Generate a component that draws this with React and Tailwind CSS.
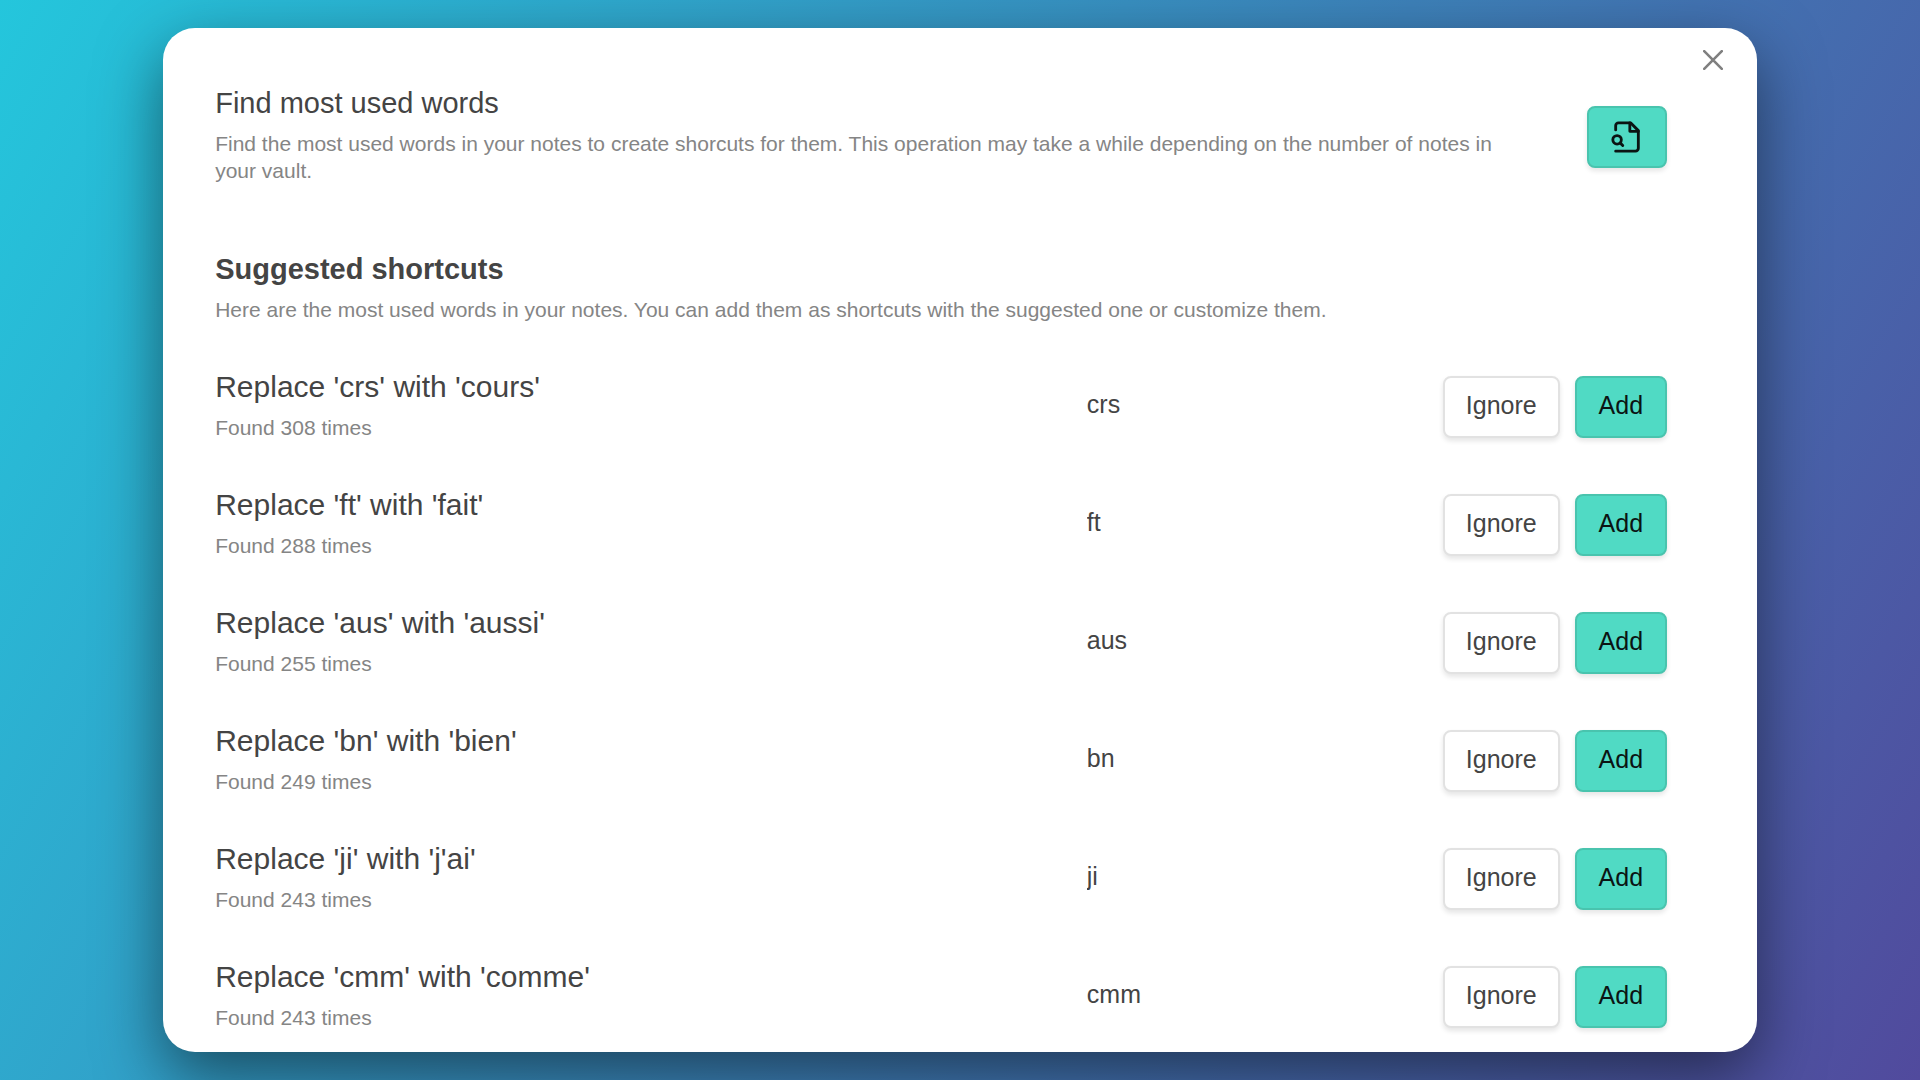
const suggestions = [
  { word: "cours", shortcut: "crs", count: 308 },
  { word: "fait", shortcut: "ft", count: 288 },
  { word: "aussi", shortcut: "aus", count: 255 },
  { word: "bien", shortcut: "bn", count: 249 },
  { word: "j'ai", shortcut: "ji", count: 243 },
  { word: "comme", shortcut: "cmm", count: 243 },
];

const accentButton =
  "flex h-[62px] shrink-0 cursor-pointer items-center justify-center rounded-lg border-2 border-[#49c4ae] bg-[#50dac4] text-[25px] leading-[30px] text-[#0b1413] shadow-[0_3px_5px_rgba(0,0,0,0.1)]";
const plainButton =
  "flex h-[62px] shrink-0 cursor-pointer items-center justify-center rounded-lg border-2 border-[#e2e2e2] bg-white text-[25px] leading-[30px] text-[#444] shadow-[0_3px_5px_rgba(0,0,0,0.1)]";

function CloseIcon() {
  return (
    <svg viewBox="0 0 20 20" className="size-5" fill="none" stroke="currentColor" strokeWidth="2.6" strokeLinecap="round" aria-hidden="true">
      <path d="M1.2 1.2 18.8 18.8M18.8 1.2 1.2 18.8" />
    </svg>
  );
}

function FileSearchIcon() {
  return (
    <svg viewBox="0 0 24 24" className="size-[34px]" fill="none" stroke="currentColor" strokeWidth="2" strokeLinecap="round" strokeLinejoin="round" aria-hidden="true">
      <path d="M4 22h14a2 2 0 0 0 2-2V7.5L14.5 2H6a2 2 0 0 0-2 2v3" />
      <path d="M14 2v6h6" />
      <circle cx="5" cy="14" r="3" />
      <path d="m9 18-1.5-1.5" />
    </svg>
  );
}

function SuggestionRow({ word, shortcut, count }) {
  return (
    <li className="flex items-center">
      <div className="min-w-0 flex-1">
        <h3 className="text-[30px] leading-[38px]">
          Replace '{shortcut}' with '{word}'
        </h3>
        <p className="mt-2 text-[21px] leading-[27px] text-[#858585]">Found {count} times</p>
      </div>
      <div className="flex items-center gap-[15px] pt-1">
        <input
          type="text"
          defaultValue={shortcut}
          aria-label={`Shortcut for ${word}`}
          className="h-[62px] w-[353px] bg-transparent px-3 pb-1 text-[25px] leading-[30px] text-[#444] outline-none"
        />
        <button type="button" className={`${plainButton} w-[117px] pb-1`}>
          Ignore
        </button>
        <button type="button" className={`${accentButton} w-[92px] pb-1`}>
          Add
        </button>
      </div>
    </li>
  );
}

export default function App() {
  return (
    <div className="flex h-screen bg-[linear-gradient(120deg,#24c6dc,#514a9d)] px-[8.5%] py-7 font-['Liberation_Sans',Arial,sans-serif] text-[#444]">
      <main
        role="dialog"
        aria-label="Find most used words"
        className="relative flex-1 overflow-hidden rounded-[32px] bg-white pt-14 pr-[90px] pl-[52px] shadow-[0_24px_64px_rgba(0,0,0,0.5)]"
      >
        <button type="button" aria-label="Close" className="absolute top-[22px] right-[34px] cursor-pointer text-[#808080]">
          <CloseIcon />
        </button>

        <section className="flex items-center gap-16">
          <div className="flex-1">
            <h2 className="text-[29px] leading-[38px]">Find most used words</h2>
            <p className="mt-2 text-[21px] leading-[27px] text-[#858585]">
              Find the most used words in your notes to create shorcuts for them. This operation may take a while
              depending on the number of notes in your vault.
            </p>
          </div>
          <div className="pt-1.5">
            <button type="button" aria-label="Find most used words" className={`${accentButton} w-[80px]`}>
              <FileSearchIcon />
            </button>
          </div>
        </section>

        <section className="pt-[66px]">
          <h2 className="text-[29px] leading-[38px] font-bold">Suggested shortcuts</h2>
          <p className="mt-2 text-[21px] leading-[27px] text-[#858585]">
            Here are the most used words in your notes. You can add them as shortcuts with the suggested one or
            customize them.
          </p>
          <ul className="flex flex-col gap-[45px] pt-[45px]">
            {suggestions.map((item) => (
              <SuggestionRow key={item.shortcut} {...item} />
            ))}
          </ul>
        </section>
      </main>
    </div>
  );
}
